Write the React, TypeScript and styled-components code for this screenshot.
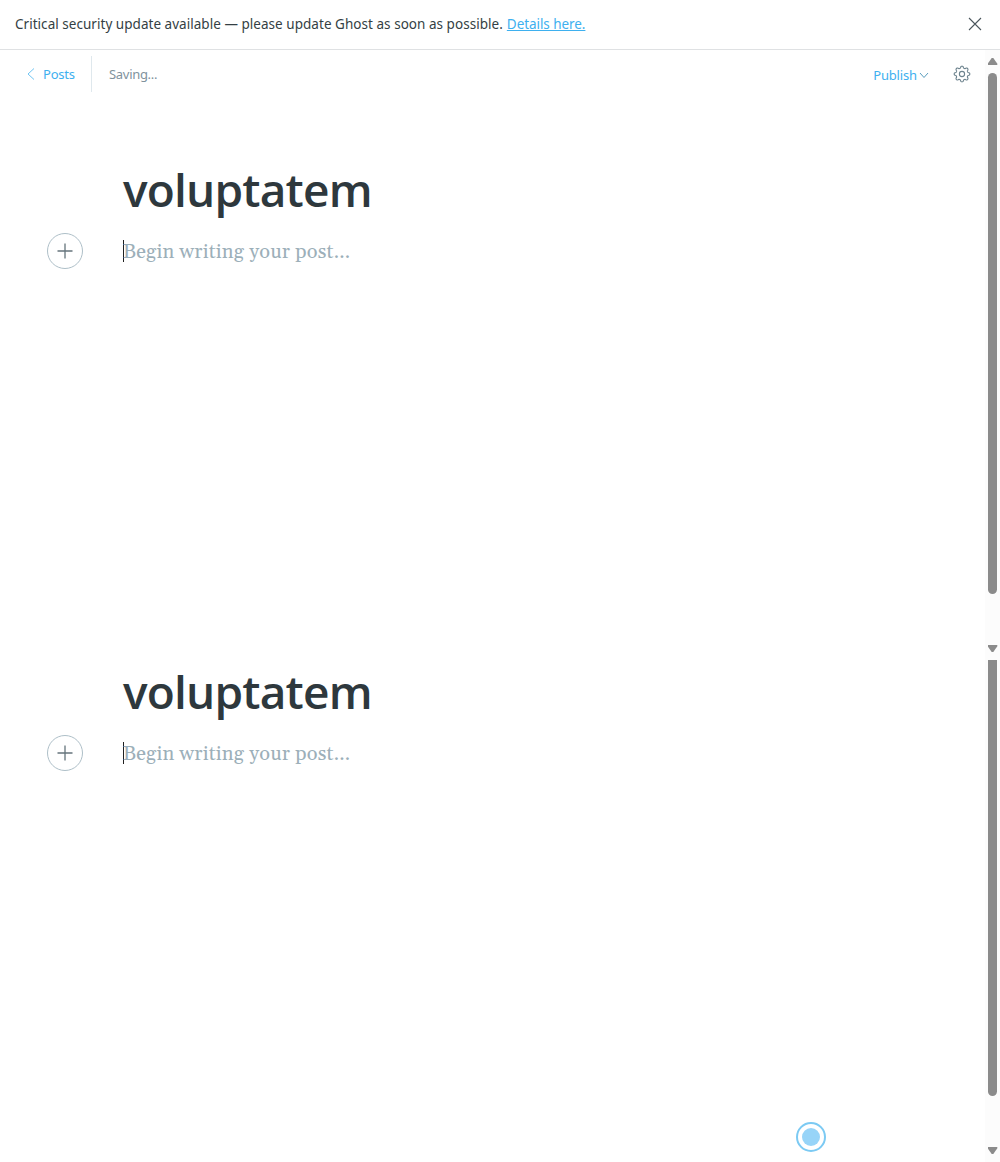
import React from "react";
import styled, { createGlobalStyle } from "styled-components";

const Global = createGlobalStyle`
  *, *::before, *::after { box-sizing: border-box; }
  body { margin: 0; background: #fff; }
`;

const ui = `"Noto Sans", "Open Sans", sans-serif`;

const Page = styled.div`
  width: 1000px;
  height: 1162px;
  display: flex;
  flex-direction: column;
  overflow: hidden;
  background: #fff;
  font-family: ${ui};
  color: #343f44;
`;

const Alert = styled.header`
  flex: none;
  height: 50px;
  padding: 0 18px 2px 15px;
  display: flex;
  align-items: center;
  justify-content: space-between;
  border-bottom: 1px solid #dfe1e3;
`;

const AlertText = styled.div`
  display: flex;
  gap: 4px;
  font-size: 13.5px;
  line-height: 20px;
  white-space: nowrap;
`;

const Message = styled.span`
  letter-spacing: 0.035px;
`;

const DetailsLink = styled.a`
  letter-spacing: -0.06px;
  color: #3eb0ef;
  text-decoration: underline;
  text-underline-offset: 1px;
`;

const IconButton = styled.button`
  display: flex;
  padding: 0;
  border: 0;
  background: none;
`;

const Pane = styled.section<{ $height: number }>`
  flex: none;
  height: ${(p) => p.$height}px;
  display: flex;
`;

const Content = styled.main`
  flex: 1;
  min-width: 0;
  display: flex;
  flex-direction: column;
`;

const Toolbar = styled.nav`
  height: 48px;
  padding: 0 14px 0 26px;
  display: flex;
  align-items: center;
  font-size: 13px;
  line-height: 18px;
`;

const BackLink = styled.a`
  display: flex;
  align-items: center;
  gap: 7px;
  height: 36px;
  width: 66px;
  margin-top: -1px;
  border-right: 1px solid #dfe8ed;
  letter-spacing: -0.2px;
  color: #3eb0ef;
`;

const Status = styled.span`
  margin-left: 17px;
  letter-spacing: -0.3px;
  color: #7f929d;
`;

const Actions = styled.div`
  margin-left: auto;
  display: flex;
  align-items: center;
  gap: 24px;
`;

const Publish = styled.button`
  display: flex;
  align-items: center;
  gap: 2px;
  padding: 2px 0 0;
  border: 0;
  background: none;
  font: 13px/18px ${ui};
  letter-spacing: -0.15px;
  color: #3eb0ef;
`;

const Editor = styled.article<{ $top: number }>`
  padding: ${(p) => p.$top}px 47px 0;
  display: flex;
  flex-direction: column;
`;

const Title = styled.h1`
  margin: 0 0 0 76px;
  height: 60px;
  font: 600 46px/58px "Open Sans", sans-serif;
  letter-spacing: -0.8px;
  color: #2e383d;
`;

const Body = styled.div`
  display: flex;
  align-items: center;
  gap: 40px;
  height: 36px;
  margin-top: 13px;
`;

const AddButton = styled.button`
  width: 36px;
  height: 36px;
  padding: 0;
  display: flex;
  align-items: center;
  justify-content: center;
  border: 1px solid #aebfc8;
  border-radius: 50%;
  background: #fff;
`;

const Placeholder = styled.p`
  margin: 0;
  height: 22px;
  border-left: 1px solid #202020;
  font: 20px/24px Georgia, Gelasio, "Noto Serif", "DejaVu Serif Condensed", serif;
  letter-spacing: 0.17px;
  text-indent: -1px;
  white-space: nowrap;
  color: #9cafb9;
`;

const Track = styled.aside<{ $top: number }>`
  width: 15px;
  padding: ${(p) => p.$top}px 3px 8px;
  display: flex;
  flex-direction: column;
  align-items: center;
  background: #fcfcfc;
`;

const Thumb = styled.div<{ $height: number; $cut?: boolean }>`
  width: 9px;
  height: ${(p) => p.$height}px;
  border-radius: ${(p) => (p.$cut ? "0 0 5px 5px" : "5px")};
  background: #8b8b8b;
`;

const Arrow = styled.div<{ $down?: boolean }>`
  width: 10px;
  height: 7px;
  margin-top: ${(p) => (p.$down ? "auto" : "0")};
  margin-bottom: ${(p) => (p.$down ? "0" : "8px")};
  background: #8b8b8b;
  clip-path: ${(p) =>
    p.$down
      ? "polygon(4% 0, 96% 0, 100% 14%, 58% 100%, 42% 100%, 0 14%)"
      : "polygon(42% 0, 58% 0, 100% 86%, 96% 100%, 4% 100%, 0 86%)"};
`;

const Beacon = styled.div`
  position: absolute;
  left: 796px;
  top: 1122px;
  width: 30px;
  height: 30px;
  display: flex;
  align-items: center;
  justify-content: center;
  border: 2px solid #7ccaf3;
  border-radius: 50%;

  &::after {
    content: "";
    width: 18px;
    height: 18px;
    border-radius: 50%;
    background: #97d4f8;
  }
`;

const gearPath = (() => {
  const points: string[] = [];
  for (let i = 0; i <= 160; i++) {
    const a = (i / 160) * Math.PI * 2;
    const wave = Math.tanh(1.6 * Math.cos(8 * a)) / Math.tanh(1.6);
    const r = 6.9 + 0.9 * wave;
    points.push(`${(8 + r * Math.sin(a)).toFixed(2)} ${(8 - r * Math.cos(a)).toFixed(2)}`);
  }
  return `M${points.join("L")}Z`;
})();

const Gear = () => (
  <svg width="18" height="18" viewBox="-1 -1 18 18" fill="none" stroke="#6d838e" strokeWidth="1.1">
    <path d={gearPath} strokeLinejoin="round" />
    <circle cx="8" cy="8" r="2.6" />
  </svg>
);

const Draft = ({ top }: { top: number }) => (
  <Editor $top={top}>
    <Title>voluptatem</Title>
    <Body>
      <AddButton aria-label="Add a card">
        <svg width="16" height="16" viewBox="0 0 16 16" fill="none" stroke="#65747c" strokeWidth="1.3">
          <path d="M8 .5v15M.5 8h15" />
        </svg>
      </AddButton>
      <Placeholder>Begin writing your post...</Placeholder>
    </Body>
  </Editor>
);

export default function App() {
  return (
    <Page>
      <Global />
      <Alert>
        <AlertText>
          <Message>
            Critical security update available — please update Ghost as soon as possible.
          </Message>
          <DetailsLink>Details here.</DetailsLink>
        </AlertText>
        <IconButton aria-label="Dismiss">
          <svg width="14" height="14" viewBox="0 0 14 14" fill="none" stroke="#4b565c" strokeWidth="1.1">
            <path d="M1 1l12 12M13 1L1 13" />
          </svg>
        </IconButton>
      </Alert>
      <Pane $height={610}>
        <Content>
          <Toolbar>
            <BackLink>
              <svg width="10" height="14" viewBox="0 0 10 14" fill="none" stroke="#70c5f3" strokeWidth="1">
                <path d="M8 1.5L2 7l6 5.5" />
              </svg>
              Posts
            </BackLink>
            <Status>Saving...</Status>
            <Actions>
              <Publish>
                Publish
                <svg width="10" height="8" viewBox="0 0 10 8" fill="none" stroke="#5a9dbd" strokeWidth="1">
                  <path d="M1 2l4 4.5L9 2" />
                </svg>
              </Publish>
              <IconButton aria-label="Settings">
                <Gear />
              </IconButton>
            </Actions>
          </Toolbar>
          <Draft top={62} />
        </Content>
        <Track $top={8}>
          <Arrow />
          <Thumb $height={521} />
          <Arrow $down />
        </Track>
      </Pane>
      <Pane $height={502}>
        <Content>
          <Draft top={2} />
        </Content>
        <Track $top={0}>
          <Thumb $height={436} $cut />
          <Arrow $down />
        </Track>
      </Pane>
      <Beacon />
    </Page>
  );
}
